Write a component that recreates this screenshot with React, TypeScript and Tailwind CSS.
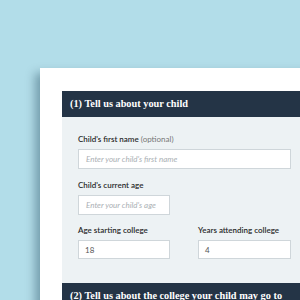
import React from "react";

export default function App() {
  const sans = { fontFamily: "Lato, 'Open Sans', sans-serif" };
  const serif = { fontFamily: "'Liberation Serif', 'DejaVu Serif', serif" };
  return (
    <div className="w-[300px] h-[300px] overflow-hidden bg-[#b2dde9] pl-[40px] pt-[68px]">
      <div className="w-[400px] h-[300px] bg-white pl-[22px] pt-[23px] shadow-[-5px_5px_9px_rgba(0,40,60,0.35)]">
        <div className="h-[26px] bg-[#243446] flex items-center pl-[8px] text-white font-bold text-[10.3px]" style={serif}>
          (1) Tell us about your child
        </div>
        <div className="bg-[#edf2f4] pl-[16px] pt-[17px] pb-[24px] text-[8px] text-[#333]" style={sans}>
          <div className="leading-[11px] font-semibold text-[#2a2a2a]">
            Child's first name <span className="font-normal text-[#777]">(optional)</span>
          </div>
          <div className="mt-[4px] w-[213px] h-[20px] bg-white border border-[#cfd6da] flex items-center pl-[7px] italic text-[#aab0b4]">
            Enter your child's first name
          </div>
          <div className="mt-[11px] leading-[11px] font-semibold text-[#2a2a2a]">Child's current age</div>
          <div className="mt-[4px] w-[92px] h-[20px] bg-white border border-[#cfd6da] flex items-center pl-[7px] italic text-[#aab0b4]">
            Enter your child's age
          </div>
          <div className="mt-[10px] flex gap-[28px]">
            <div className="w-[92px]">
              <div className="leading-[11px] font-semibold text-[#2a2a2a]">Age starting college</div>
              <div className="mt-[4px] h-[19px] bg-white border border-[#cfd6da] flex items-center pl-[6px] text-[#555]">18</div>
            </div>
            <div className="w-[93px]">
              <div className="leading-[11px] font-semibold text-[#2a2a2a] whitespace-nowrap">Years attending college</div>
              <div className="mt-[4px] h-[19px] bg-white border border-[#cfd6da] flex items-center pl-[6px] text-[#555]">4</div>
            </div>
          </div>
        </div>
        <div className="h-[26px] bg-[#243446] flex items-center pl-[8px] text-white font-bold text-[10.3px]" style={serif}>
          (2) Tell us about the college your child may go to
        </div>
      </div>
    </div>
  );
}
